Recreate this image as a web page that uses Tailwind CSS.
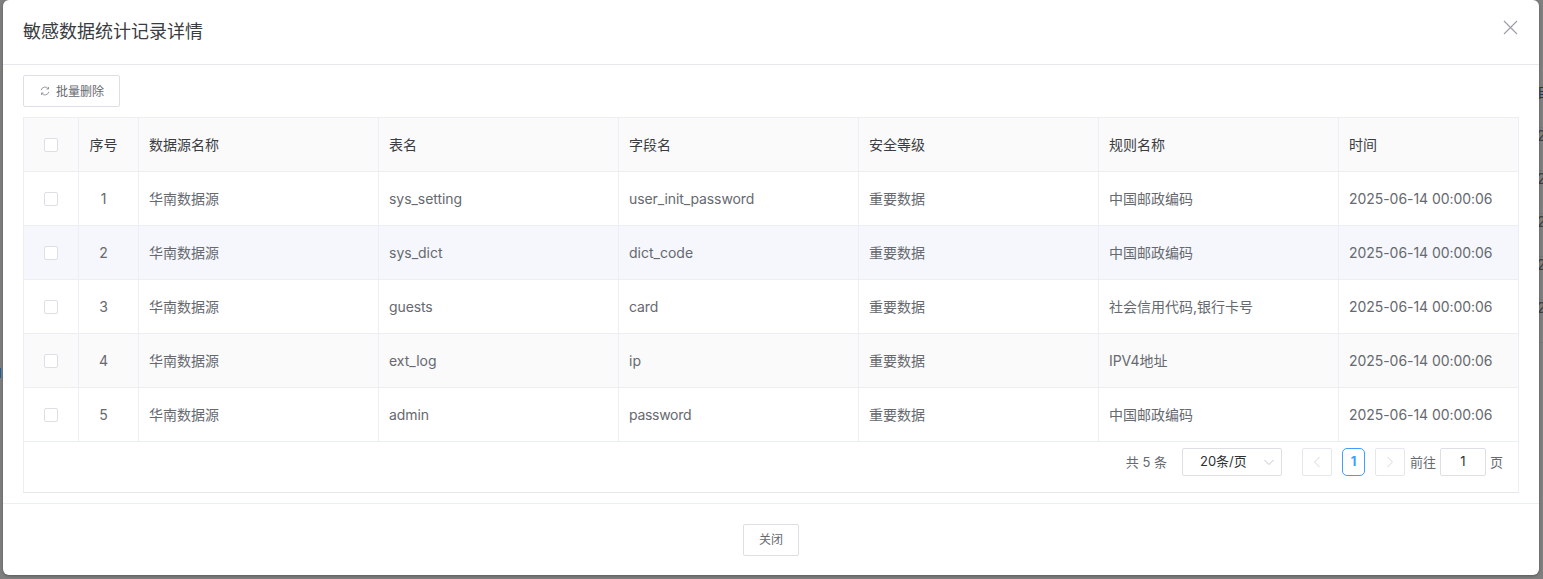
<!DOCTYPE html>
<html lang="zh">
<head>
<meta charset="utf-8">
<script src="https://cdn.jsdelivr.net/npm/@tailwindcss/browser@4"></script>
</head>
<body class="m-0">
<div class="relative w-[1543px] h-[579px] overflow-hidden bg-[#7f7f7f] font-['Inter','Noto_Sans_CJK_SC',sans-serif] text-[14px] text-[#66696f]">
  <!-- page behind the overlay -->
  <div class="absolute left-[1537px] top-[84px] w-[6px] flex flex-col text-[#3f3f3f] text-[14px] leading-[16px]">
    <span class="h-[44px] border-b border-[#777777] text-[#2a3550]">自</span>
    <span class="h-[43px] border-b border-[#777777]">2</span>
    <span class="h-[43px] border-b border-[#777777]">2</span>
    <span class="h-[43px] border-b border-[#777777]">2</span>
    <span class="h-[43px] border-b border-[#777777]">2</span>
    <span class="h-[43px] border-b border-[#777777]">2</span>
  </div>
  <div class="absolute left-0 top-[368px] w-[1px] h-[10px] bg-[#1f5f9f]"></div>

  <div class="relative ml-[3px] w-[1536px] h-[575px] bg-white rounded-[6px] shadow-[0_1px_3px_rgba(0,0,0,0.3)] flex flex-col">
    <header class="h-[65px] shrink-0 border-b border-[#e8e8ec] flex items-center justify-between pl-[20px] pr-[21px]">
      <h1 class="text-[18px] leading-[24px] text-[#3a3c42] font-normal">敏感数据统计记录详情</h1>
      <svg class="w-[15px] h-[15px] mt-[-10px] text-[#9a9da6]" viewBox="0 0 15 15" fill="none" stroke="currentColor" stroke-width="1.1"><path d="M1 1L14 14M14 1L1 14"/></svg>
    </header>

    <div class="px-[20px] pt-[10px] pb-[10px] shrink-0">
      <button class="w-[97px] h-[32px] border border-[#dcdfe6] rounded-[2px] bg-white flex items-center justify-center gap-[6px] pl-[1px] text-[12px] text-[#66696f]">
        <svg class="w-[10px] h-[10px] text-[#85888e]" viewBox="0 0 12 12" fill="none" stroke="currentColor" stroke-width="1"><path d="M1.5 5A4.6 4.6 0 0 1 9.8 3.2M10.5 7A4.6 4.6 0 0 1 2.2 8.8"/><path d="M10.2 1.2V3.6H7.8M1.8 10.8V8.4H4.2"/></svg>
        <span class="mt-[1px]">批量删除</span>
      </button>
    </div>

    <div class="mx-[20px] w-[1496px] h-[376px] border border-[#ebeef5] border-b-[#e4e7ed] shrink-0 flex flex-col">
      <div class="grid grid-cols-[55px_60px_240px_240px_240px_240px_240px_180px] h-[54px] bg-[#fafafa] border-b border-[#ebeef5] text-[#3a3c42] items-stretch">
        <div class="flex items-center justify-center border-r border-[#ebeef5]"><span class="w-[14px] h-[14px] border border-[#dcdfe6] rounded-[2px] bg-white"></span></div>
        <div class="flex items-center justify-center pr-[10px] border-r border-[#ebeef5]">序号</div>
        <div class="flex items-center pl-[10px] border-r border-[#ebeef5]">数据源名称</div>
        <div class="flex items-center pl-[10px] border-r border-[#ebeef5]">表名</div>
        <div class="flex items-center pl-[10px] border-r border-[#ebeef5]">字段名</div>
        <div class="flex items-center pl-[10px] border-r border-[#ebeef5]">安全等级</div>
        <div class="flex items-center pl-[10px] border-r border-[#ebeef5]">规则名称</div>
        <div class="flex items-center pl-[10px]">时间</div>
      </div>

      <div class="grid grid-cols-[55px_60px_240px_240px_240px_240px_240px_180px] h-[54px] bg-white border-b border-[#ebeef5]">
        <div class="flex items-center justify-center border-r border-[#ebeef5]"><span class="w-[14px] h-[14px] border border-[#dcdfe6] rounded-[2px] bg-white"></span></div>
        <div class="flex items-center justify-center pr-[10px] border-r border-[#ebeef5]">1</div>
        <div class="flex items-center pl-[10px] border-r border-[#ebeef5]">华南数据源</div>
        <div class="flex items-center pl-[10px] border-r border-[#ebeef5] tracking-[-0.05px]">sys_setting</div>
        <div class="flex items-center pl-[10px] border-r border-[#ebeef5] tracking-[-0.1px]">user_init_password</div>
        <div class="flex items-center pl-[10px] border-r border-[#ebeef5]">重要数据</div>
        <div class="flex items-center pl-[10px] border-r border-[#ebeef5]">中国邮政编码</div>
        <div class="flex items-center pl-[10px] tracking-[-0.05px]">2025-06-14 00:00:06</div>
      </div>

      <div class="grid grid-cols-[55px_60px_240px_240px_240px_240px_240px_180px] h-[54px] bg-[#f5f7fc] border-b border-[#ebeef5]">
        <div class="flex items-center justify-center border-r border-[#ebeef5]"><span class="w-[14px] h-[14px] border border-[#dcdfe6] rounded-[2px] bg-white"></span></div>
        <div class="flex items-center justify-center pr-[10px] border-r border-[#ebeef5]">2</div>
        <div class="flex items-center pl-[10px] border-r border-[#ebeef5]">华南数据源</div>
        <div class="flex items-center pl-[10px] border-r border-[#ebeef5]">sys_dict</div>
        <div class="flex items-center pl-[10px] border-r border-[#ebeef5]">dict_code</div>
        <div class="flex items-center pl-[10px] border-r border-[#ebeef5]">重要数据</div>
        <div class="flex items-center pl-[10px] border-r border-[#ebeef5]">中国邮政编码</div>
        <div class="flex items-center pl-[10px] tracking-[-0.05px]">2025-06-14 00:00:06</div>
      </div>

      <div class="grid grid-cols-[55px_60px_240px_240px_240px_240px_240px_180px] h-[54px] bg-white border-b border-[#ebeef5]">
        <div class="flex items-center justify-center border-r border-[#ebeef5]"><span class="w-[14px] h-[14px] border border-[#dcdfe6] rounded-[2px] bg-white"></span></div>
        <div class="flex items-center justify-center pr-[10px] border-r border-[#ebeef5]">3</div>
        <div class="flex items-center pl-[10px] border-r border-[#ebeef5]">华南数据源</div>
        <div class="flex items-center pl-[10px] border-r border-[#ebeef5] tracking-[-0.1px]">guests</div>
        <div class="flex items-center pl-[10px] border-r border-[#ebeef5] tracking-[-0.1px]">card</div>
        <div class="flex items-center pl-[10px] border-r border-[#ebeef5]">重要数据</div>
        <div class="flex items-center pl-[10px] border-r border-[#ebeef5]">社会信用代码,银行卡号</div>
        <div class="flex items-center pl-[10px] tracking-[-0.05px]">2025-06-14 00:00:06</div>
      </div>

      <div class="grid grid-cols-[55px_60px_240px_240px_240px_240px_240px_180px] h-[54px] bg-[#fafafa] border-b border-[#ebeef5]">
        <div class="flex items-center justify-center border-r border-[#ebeef5]"><span class="w-[14px] h-[14px] border border-[#dcdfe6] rounded-[2px] bg-white"></span></div>
        <div class="flex items-center justify-center pr-[10px] border-r border-[#ebeef5]">4</div>
        <div class="flex items-center pl-[10px] border-r border-[#ebeef5]">华南数据源</div>
        <div class="flex items-center pl-[10px] border-r border-[#ebeef5]">ext_log</div>
        <div class="flex items-center pl-[10px] border-r border-[#ebeef5]">ip</div>
        <div class="flex items-center pl-[10px] border-r border-[#ebeef5]">重要数据</div>
        <div class="flex items-center pl-[10px] border-r border-[#ebeef5] tracking-[-0.1px]">IPV4地址</div>
        <div class="flex items-center pl-[10px] tracking-[-0.05px]">2025-06-14 00:00:06</div>
      </div>

      <div class="grid grid-cols-[55px_60px_240px_240px_240px_240px_240px_180px] h-[54px] bg-white border-b border-[#ebeef5]">
        <div class="flex items-center justify-center border-r border-[#ebeef5]"><span class="w-[14px] h-[14px] border border-[#dcdfe6] rounded-[2px] bg-white"></span></div>
        <div class="flex items-center justify-center pr-[10px] border-r border-[#ebeef5]">5</div>
        <div class="flex items-center pl-[10px] border-r border-[#ebeef5]">华南数据源</div>
        <div class="flex items-center pl-[10px] border-r border-[#ebeef5] tracking-[-0.1px]">admin</div>
        <div class="flex items-center pl-[10px] border-r border-[#ebeef5] tracking-[-0.3px]">password</div>
        <div class="flex items-center pl-[10px] border-r border-[#ebeef5]">重要数据</div>
        <div class="flex items-center pl-[10px] border-r border-[#ebeef5]">中国邮政编码</div>
        <div class="flex items-center pl-[10px] tracking-[-0.05px]">2025-06-14 00:00:06</div>
      </div>

      <div class="flex items-start justify-end pt-[6px] pr-[15px] text-[13px] flex-1">
        <span class="leading-[28px] mr-[15px]">共 5 条</span>
        <div class="w-[100px] h-[28px] border border-[#dcdfe6] rounded-[2px] flex items-center justify-between pl-[17px] pr-[6px] text-[#303133] mr-[20px]">
          <span>20条/页</span>
          <svg class="w-[12px] h-[12px] text-[#c0c4cc]" viewBox="0 0 12 12" fill="none" stroke="currentColor" stroke-width="1"><path d="M1.5 4L6 8.5L10.5 4"/></svg>
        </div>
        <div class="w-[30px] h-[28px] border border-[#e4e7ed] rounded-[2px] flex items-center justify-center mr-[10px]">
          <svg class="w-[10px] h-[12px] text-[#d5d8de]" viewBox="0 0 10 12" fill="none" stroke="currentColor" stroke-width="1"><path d="M7.5 1L2.5 6L7.5 11"/></svg>
        </div>
        <div class="w-[23px] h-[28px] border border-[#409eff] rounded-[5px] flex items-center justify-center text-[#409eff] font-bold mr-[10px]">1</div>
        <div class="w-[30px] h-[28px] border border-[#e4e7ed] rounded-[2px] flex items-center justify-center mr-[5px]">
          <svg class="w-[10px] h-[12px] text-[#d5d8de]" viewBox="0 0 10 12" fill="none" stroke="currentColor" stroke-width="1"><path d="M2.5 1L7.5 6L2.5 11"/></svg>
        </div>
        <span class="leading-[28px] mr-[4px]">前往</span>
        <div class="w-[46px] h-[28px] border border-[#dcdfe6] rounded-[2px] flex items-center justify-center text-[#303133] mr-[4px]">1</div>
        <span class="leading-[28px]">页</span>
      </div>
    </div>

    <footer class="mt-[10px] border-t border-[#ebeef5] flex-1 flex items-start justify-center pt-[20px]">
      <button class="w-[56px] h-[32px] border border-[#dcdfe6] rounded-[2px] bg-white text-[12px] text-[#66696f]">关闭</button>
    </footer>
  </div>
</div>
</body>
</html>
